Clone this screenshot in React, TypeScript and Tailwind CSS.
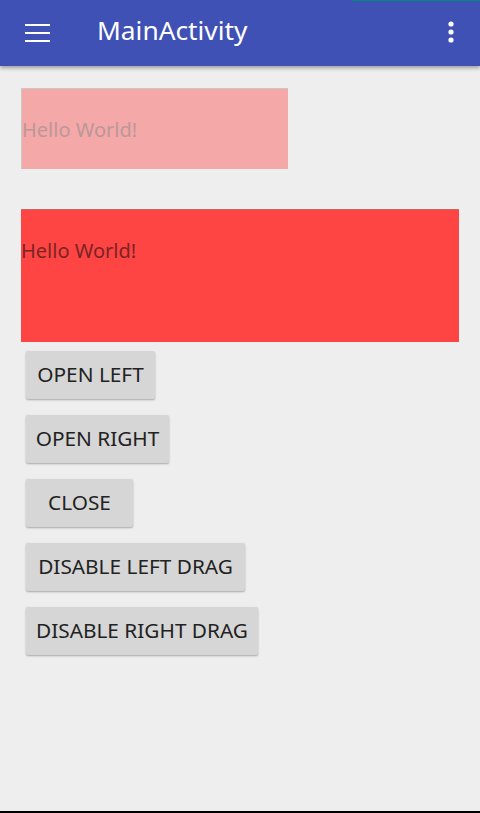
import React from "react";

const font = { fontFamily: '"Noto Sans", "Open Sans", sans-serif' };

function Btn({ label, w }: { label: string; w: string }) {
  return (
    <div className={`h-[48px] ${w} bg-[#d6d6d6] rounded-[2px] shadow-[0_1px_2px_rgba(0,0,0,0.3)] flex items-center justify-center text-[20.8px] text-[#222] tracking-[0px]`}>
      {label}
    </div>
  );
}

export default function App() {
  return (
    <div className="w-[480px] h-[813px] bg-[#eeeeee] flex flex-col relative overflow-hidden" style={font}>
      <div className="relative h-[66px] bg-[#3f51b5] shadow-[0_2px_4px_rgba(0,0,0,0.35)] flex items-center shrink-0 z-10">
        <div className="absolute top-0 left-[352px] right-0 h-[1px] bg-[#00897b]" />
        <svg width="26" height="20" className="ml-[25px]" viewBox="0 0 26 20">
          <rect x="0" y="1" width="25" height="2" fill="#fff" />
          <rect x="0" y="9" width="25" height="2" fill="#fff" />
          <rect x="0" y="17" width="25" height="2" fill="#fff" />
        </svg>
        <div className="ml-[46px] text-white text-[26.3px] leading-none pb-[6px]">MainActivity</div>
        <svg width="6" height="24" className="ml-auto mr-[26px]" viewBox="0 0 6 24">
          <circle cx="3" cy="3" r="2.6" fill="#fff" />
          <circle cx="3" cy="11" r="2.6" fill="#fff" />
          <circle cx="3" cy="19" r="2.6" fill="#fff" />
        </svg>
      </div>
      <div className="flex flex-col pl-[21px] pt-[22px]">
        <div className="w-[267px] h-[81px] bg-[#f4a8a8] border-t border-l border-[#c8c8c8] flex items-center">
          <span className="text-[20px] text-[#bb9898] leading-none pt-[1px]">Hello World!</span>
        </div>
        <div className="mt-[40px] w-[438px] h-[133px] bg-[#ff4444] border-t border-[#c96464] pt-[30px]">
          <span className="text-[20px] text-[#7a2424] leading-none">Hello World!</span>
        </div>
        <div className="flex flex-col gap-[16px] pl-[5px] pt-[9px]">
          <Btn label="OPEN LEFT" w="w-[129px]" />
          <Btn label="OPEN RIGHT" w="w-[143px]" />
          <Btn label="CLOSE" w="w-[107px]" />
          <Btn label="DISABLE LEFT DRAG" w="w-[219px]" />
          <Btn label="DISABLE RIGHT DRAG" w="w-[232px]" />
        </div>
      </div>
      <div className="absolute bottom-0 left-0 right-0 h-[2px] bg-black" />
    </div>
  );
}
